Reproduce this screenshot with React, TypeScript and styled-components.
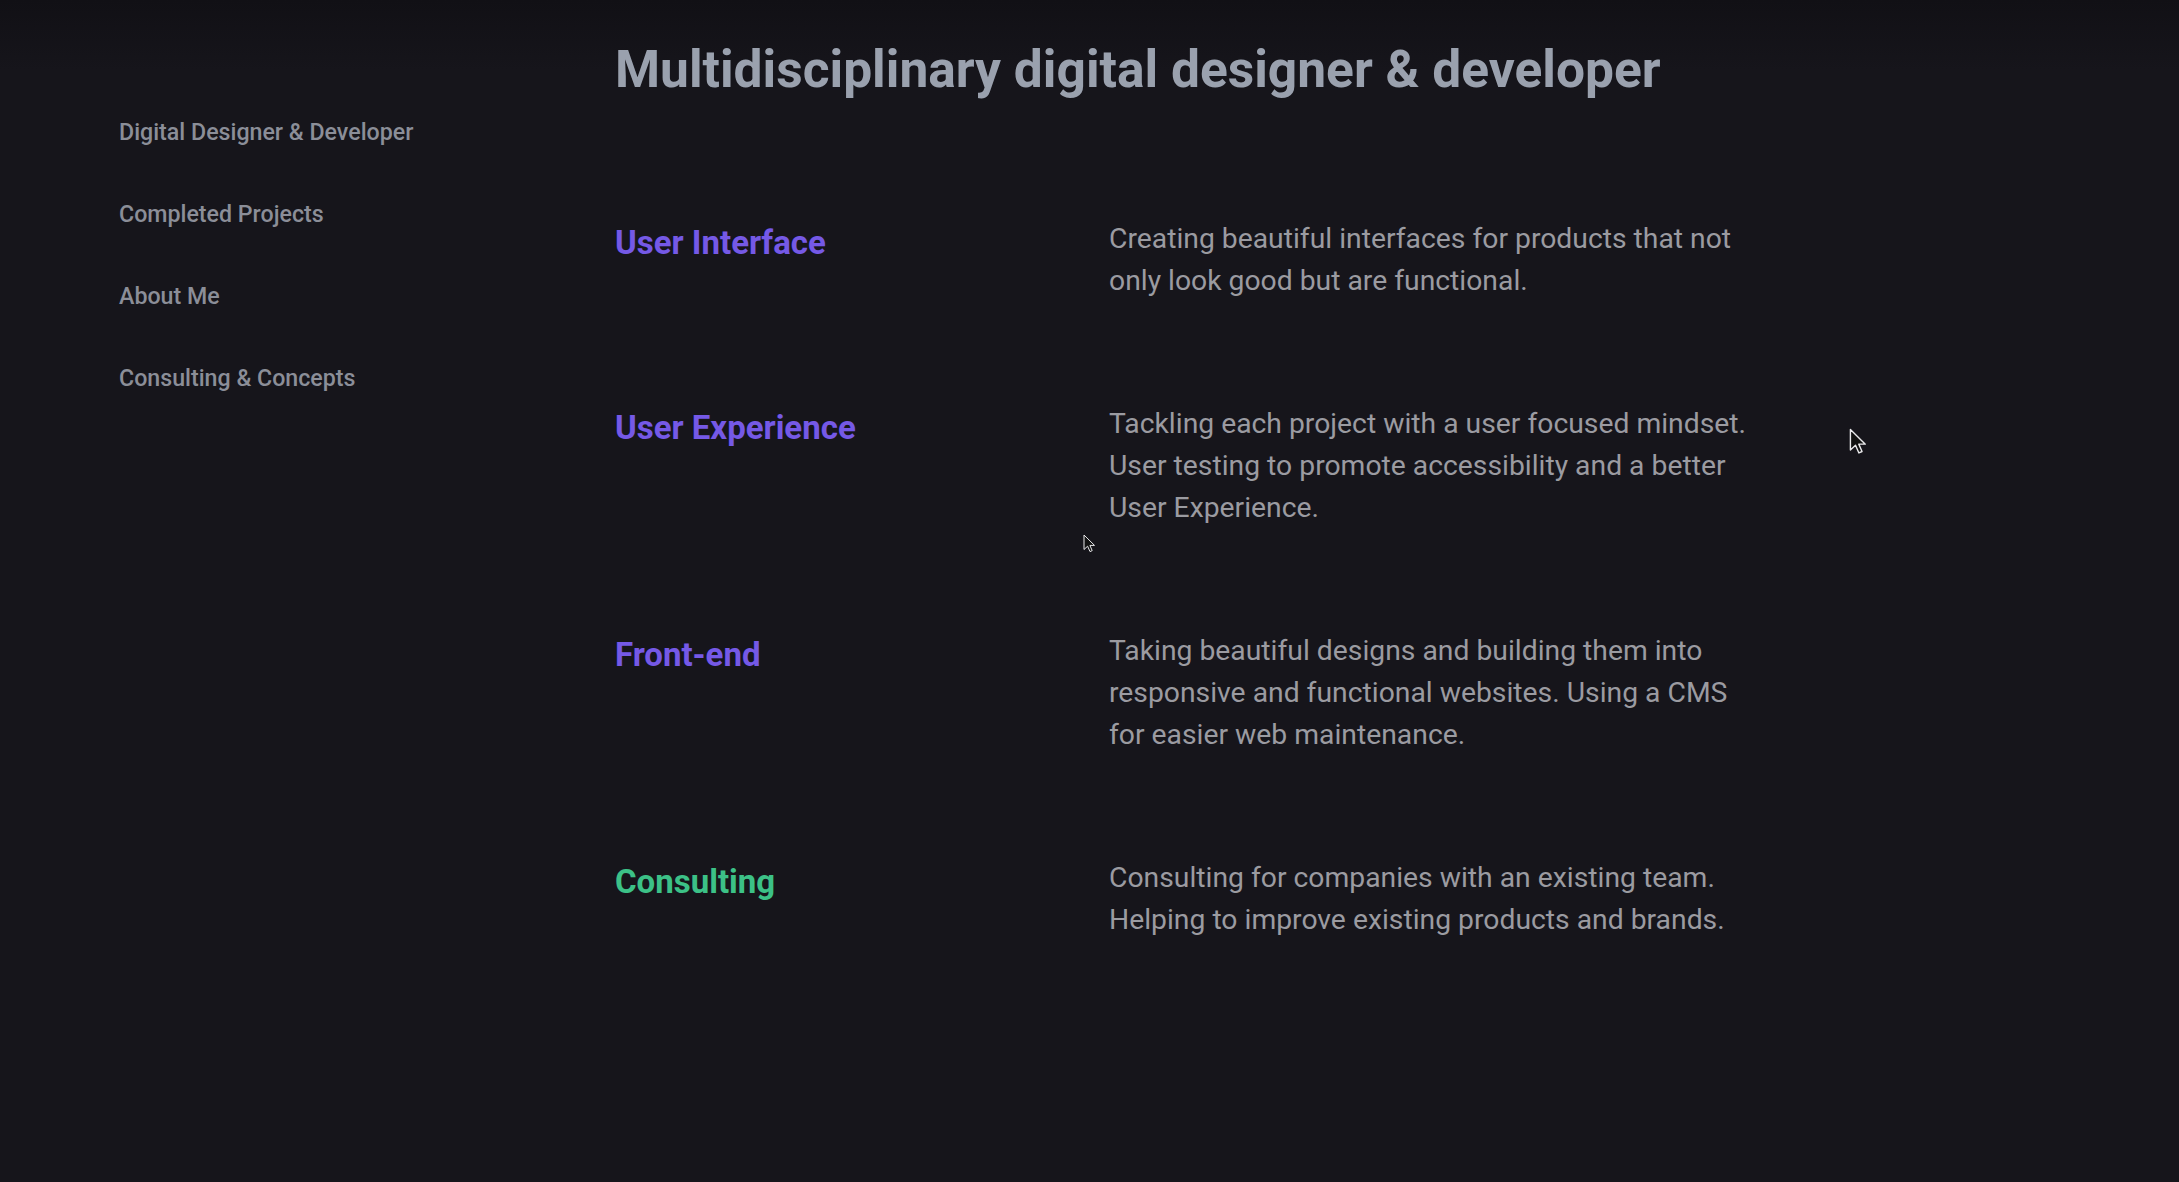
import React from "react";
import styled, { createGlobalStyle } from "styled-components";

const Global = createGlobalStyle`
  html, body {
    margin: 0;
    padding: 0;
    background: #16151b;
  }
  body {
    font-family: Roboto, "Liberation Sans", sans-serif;
    -webkit-font-smoothing: antialiased;
  }
`;

const Page = styled.div`
  position: relative;
  min-height: 1182px;
  display: flex;
  background: linear-gradient(180deg, #111015 0px, #16151b 70px, #16151b 100%);
  overflow: hidden;
`;

const Sidebar = styled.nav`
  width: 496px;
  flex-shrink: 0;
  padding: 117.5px 0 0 119px;
  box-sizing: content-box;
  display: flex;
  flex-direction: column;
  gap: 54.3px;
`;

const NavItem = styled.a`
  display: block;
  font-size: 23.2px;
  line-height: 28px;
  font-weight: 500;
  color: #8b8e98;
  text-decoration: none;
  white-space: nowrap;
`;

const Main = styled.main`
  padding-top: 39px;
  display: flex;
  flex-direction: column;
`;

const Title = styled.h1`
  margin: 0;
  font-size: 51.5px;
  line-height: 62px;
  font-weight: 700;
  color: #9aa1ae;
  white-space: nowrap;
`;

const Services = styled.div`
  margin-top: 117px;
  display: flex;
  flex-direction: column;
  gap: 101px;
`;

const Row = styled.section`
  display: grid;
  grid-template-columns: 494px 656px;
  align-items: start;
`;

const Heading = styled.h2<{ $accent: string }>`
  margin: 5px 0 0;
  font-size: 33px;
  line-height: 40px;
  font-weight: 700;
  color: ${(p) => p.$accent};
`;

const Description = styled.p`
  margin: 0;
  font-size: 28.3px;
  line-height: 42px;
  font-weight: 400;
  color: #9b9ba1;
`;

const Cursor = styled.svg<{ $x: number; $y: number; $w: number }>`
  position: absolute;
  left: ${(p) => p.$x}px;
  top: ${(p) => p.$y}px;
  width: ${(p) => p.$w}px;
  height: auto;
  pointer-events: none;
`;

const PURPLE = "#7559e6";
const GREEN = "#3cc187";

const nav = [
  "Digital Designer & Developer",
  "Completed Projects",
  "About Me",
  "Consulting & Concepts",
];

const services = [
  {
    title: "User Interface",
    accent: PURPLE,
    text: "Creating beautiful interfaces for products that not only look good but are functional.",
  },
  {
    title: "User Experience",
    accent: PURPLE,
    text: "Tackling each project with a user focused mindset. User testing to promote accessibility and a better User Experience.",
  },
  {
    title: "Front-end",
    accent: PURPLE,
    text: "Taking beautiful designs and building them into responsive and functional websites. Using a CMS for easier web maintenance.",
  },
  {
    title: "Consulting",
    accent: GREEN,
    text: "Consulting for companies with an existing team. Helping to improve existing products and brands.",
  },
];

const Pointer: React.FC<{ x: number; y: number; w: number }> = ({ x, y, w }) => (
  <Cursor $x={x} $y={y} $w={w} viewBox="0 0 12 19">
    <path
      d="M1 1 L1 15.5 L4.6 12.2 L7 17.6 L9.2 16.6 L6.9 11.4 L11.5 11.4 Z"
      fill="#111"
      stroke="#e8e8ea"
      strokeWidth="1"
      strokeLinejoin="round"
    />
  </Cursor>
);

export default function App() {
  return (
    <>
      <Global />
      <Page>
        <Sidebar>
          {nav.map((n) => (
            <NavItem key={n} href="#">
              {n}
            </NavItem>
          ))}
        </Sidebar>
        <Main>
          <Title>Multidisciplinary digital designer &amp; developer</Title>
          <Services>
            {services.map((s) => (
              <Row key={s.title}>
                <Heading $accent={s.accent}>{s.title}</Heading>
                <Description>{s.text}</Description>
              </Row>
            ))}
          </Services>
        </Main>
        <Pointer x={1083} y={534} w={12} />
        <Pointer x={1849} y={428} w={17} />
      </Page>
    </>
  );
}
